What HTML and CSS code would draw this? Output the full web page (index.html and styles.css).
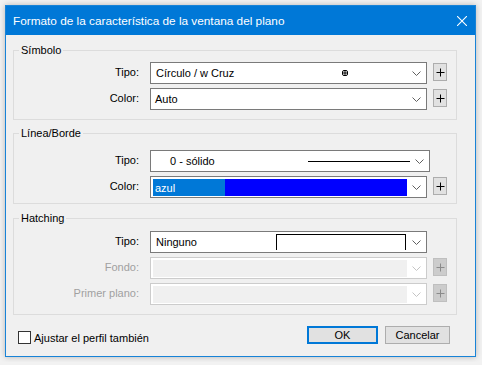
FILE: index.html
```html
<!DOCTYPE html>
<html lang="es">
<head>
    <meta charset="UTF-8">
    <title>Formato de la característica de la ventana del plano</title>
    <link rel="stylesheet" href="styles.css">
</head>
<body>

    <div class="window">
        <div class="titlebar">
            <span class="title">Formato de la característica de la ventana del plano</span>
            <svg class="close" width="10" height="10" viewBox="0 0 10 10">
                <path d="M0 0L10 10M10 0L0 10" stroke="#fff" stroke-width="1.1" fill="none"/>
            </svg>
        </div>

        <div class="content">
            <!-- Símbolo -->
            <div class="group group-symbol">
                <div class="group-title">Símbolo</div>
                <div class="rows">
                    <div class="row">
                        <label class="field-label">Tipo:</label>
                        <div class="combo">
                            <div class="combo-value">
                                <span>Círculo / w Cruz</span>
                                <svg class="symbol-mark" width="6" height="6" viewBox="0 0 6 6">
                                    <rect x="0.5" y="0.5" width="5" height="5" rx="1.5" fill="none" stroke="#000"/>
                                    <path d="M3 0.5V5.5M0.5 3H5.5" stroke="#000" fill="none"/>
                                </svg>
                            </div>
                            <div class="combo-arrow"><svg width="9" height="5" viewBox="0 0 9 5"><polyline points="0.5,0.5 4.5,4.5 8.5,0.5" fill="none" stroke="#606060"/></svg></div>
                        </div>
                        <button class="add-btn"><svg width="9" height="9" viewBox="0 0 9 9"><path d="M4.5 0.5V8.5M0.5 4.5H8.5" stroke="#000" fill="none"/></svg></button>
                    </div>
                    <div class="row">
                        <label class="field-label">Color:</label>
                        <div class="combo">
                            <div class="combo-value"><span class="plain">Auto</span></div>
                            <div class="combo-arrow"><svg width="9" height="5" viewBox="0 0 9 5"><polyline points="0.5,0.5 4.5,4.5 8.5,0.5" fill="none" stroke="#606060"/></svg></div>
                        </div>
                        <button class="add-btn"><svg width="9" height="9" viewBox="0 0 9 9"><path d="M4.5 0.5V8.5M0.5 4.5H8.5" stroke="#000" fill="none"/></svg></button>
                    </div>
                </div>
            </div>

            <!-- Línea/Borde -->
            <div class="group group-line">
                <div class="group-title">Línea/Borde</div>
                <div class="rows">
                    <div class="row">
                        <label class="field-label">Tipo:</label>
                        <div class="combo combo-wide">
                            <div class="combo-value">
                                <span class="line-name">0 - sólido</span>
                                <span class="line-sample"></span>
                            </div>
                            <div class="combo-arrow"><svg width="9" height="5" viewBox="0 0 9 5"><polyline points="0.5,0.5 4.5,4.5 8.5,0.5" fill="none" stroke="#606060"/></svg></div>
                        </div>
                    </div>
                    <div class="row">
                        <label class="field-label">Color:</label>
                        <div class="combo">
                            <div class="combo-value color-value">
                                <span class="color-selected">azul</span>
                                <span class="color-swatch" style="background: #0000ff;"></span>
                            </div>
                            <div class="combo-arrow"><svg width="9" height="5" viewBox="0 0 9 5"><polyline points="0.5,0.5 4.5,4.5 8.5,0.5" fill="none" stroke="#606060"/></svg></div>
                        </div>
                        <button class="add-btn"><svg width="9" height="9" viewBox="0 0 9 9"><path d="M4.5 0.5V8.5M0.5 4.5H8.5" stroke="#000" fill="none"/></svg></button>
                    </div>
                </div>
            </div>

            <!-- Hatching -->
            <div class="group group-hatch">
                <div class="group-title">Hatching</div>
                <div class="rows">
                    <div class="row">
                        <label class="field-label">Tipo:</label>
                        <div class="combo">
                            <div class="combo-value">
                                <span>Ninguno</span>
                                <span class="hatch-sample"></span>
                            </div>
                            <div class="combo-arrow"><svg width="9" height="5" viewBox="0 0 9 5"><polyline points="0.5,0.5 4.5,4.5 8.5,0.5" fill="none" stroke="#606060"/></svg></div>
                        </div>
                    </div>
                    <div class="row disabled">
                        <label class="field-label">Fondo:</label>
                        <div class="combo">
                            <div class="combo-value color-value"><span class="disabled-fill"></span></div>
                            <div class="combo-arrow"><svg width="9" height="5" viewBox="0 0 9 5"><polyline points="0.5,0.5 4.5,4.5 8.5,0.5" fill="none" stroke="#c4c4c4"/></svg></div>
                        </div>
                        <button class="add-btn"><svg width="9" height="9" viewBox="0 0 9 9"><path d="M4.5 0.5V8.5M0.5 4.5H8.5" stroke="#8a8a8a" fill="none"/></svg></button>
                    </div>
                    <div class="row disabled">
                        <label class="field-label">Primer plano:</label>
                        <div class="combo">
                            <div class="combo-value color-value"><span class="disabled-fill"></span></div>
                            <div class="combo-arrow"><svg width="9" height="5" viewBox="0 0 9 5"><polyline points="0.5,0.5 4.5,4.5 8.5,0.5" fill="none" stroke="#c4c4c4"/></svg></div>
                        </div>
                        <button class="add-btn"><svg width="9" height="9" viewBox="0 0 9 9"><path d="M4.5 0.5V8.5M0.5 4.5H8.5" stroke="#8a8a8a" fill="none"/></svg></button>
                    </div>
                </div>
            </div>

            <div class="footer">
                <label class="check">
                    <span class="check-box"></span>
                    <span>Ajustar el perfil también</span>
                </label>
                <div class="buttons">
                    <button class="btn btn-default">OK</button>
                    <button class="btn">Cancelar</button>
                </div>
            </div>
        </div>
    </div>

</body>
</html>
```

FILE: styles.css
```css
body {
    margin: 0;
    padding: 5px;
    background: #f2f2f2;
    font-family: "Liberation Sans", Arial, sans-serif;
    font-size: 11px;
    color: #000;
}
.window {
    box-sizing: border-box;
    width: 471px;
    height: 352px;
    border: 1px solid #1883d7;
    background: #f0f0f0;
    box-shadow: 0 0 6px rgba(0, 0, 0, 0.25);
}
.titlebar {
    height: 29px;
    background: #0078d7;
    color: #fff;
    display: flex;
    align-items: center;
    justify-content: space-between;
    padding: 0 8px 0 7px;
    font-size: 11.8px;
}
.content {
    padding-top: 15px;
}
.group {
    width: 444px;
    box-sizing: border-box;
    margin-left: 7px;
    border: 1px solid #dcdcdc;
}
.group-title {
    width: fit-content;
    margin: -8px 0 0 5px;
    padding: 0 2px;
    line-height: 14px;
    background: #f0f0f0;
}
.rows {
    display: flex;
    flex-direction: column;
    gap: 4px;
}
.group-symbol .rows { margin-top: 5px; padding-bottom: 9px; }
.group-line { margin-top: 13px; }
.group-line .rows { margin-top: 10px; padding-bottom: 5px; }
.group-hatch { margin-top: 14px; }
.group-hatch .rows { margin-top: 6px; padding-bottom: 9px; }

.row {
    display: flex;
    align-items: flex-start;
    height: 22px;
}
.field-label {
    width: 125px;
    margin-right: 11px;
    text-align: right;
    line-height: 20px;
}
.combo {
    box-sizing: border-box;
    width: 277px;
    height: 22px;
    border: 1px solid #7a7a7a;
    background: #fff;
    display: flex;
}
.combo-wide {
    width: 280px;
}
.combo-value {
    flex: 1;
    display: flex;
    align-items: center;
    padding-left: 5px;
}
.combo-value .plain {
    margin-left: -1px;
}
.combo-arrow {
    width: 19px;
    display: flex;
    align-items: center;
    justify-content: center;
}
.symbol-mark {
    margin-left: auto;
    margin-right: 59px;
}
.line-name {
    margin-left: 14px;
}
.line-sample {
    margin-left: auto;
    width: 102px;
    height: 1px;
    background: #000;
    margin-top: 1px;
}
.hatch-sample {
    margin-left: auto;
    margin-right: 1px;
    align-self: flex-start;
    margin-top: 2px;
    box-sizing: border-box;
    width: 130px;
    height: 16px;
    border: 1px solid #000;
    border-bottom: none;
}
.color-value {
    padding: 2px 0 1px 2px;
    align-items: stretch;
}
.color-selected {
    width: 70px;
    background: #0078d7;
    color: #fff;
    padding-left: 2px;
    display: flex;
    align-items: center;
}
.color-swatch {
    flex: 1;
}
.add-btn {
    box-sizing: border-box;
    width: 14px;
    height: 18px;
    margin: 1px 0 0 6px;
    padding: 0;
    border: 1px solid #adadad;
    background: #e1e1e1;
    display: flex;
    align-items: center;
    justify-content: center;
}

.disabled .field-label {
    color: #a0a0a0;
}
.disabled .combo {
    border-color: #cccccc;
}
.disabled-fill {
    flex: 1;
    background: #f0f0f0;
}
.disabled .add-btn {
    background: #cccccc;
    border-color: #bfbfbf;
}

.footer {
    display: flex;
    align-items: flex-start;
    margin-top: 11px;
    padding: 0 25px 0 12px;
}
.check {
    display: flex;
    align-items: center;
    margin-top: 5px;
    gap: 3px;
}
.check-box {
    box-sizing: border-box;
    width: 13px;
    height: 13px;
    border: 1px solid #333;
    background: #fff;
}
.buttons {
    margin-left: auto;
    display: flex;
    gap: 7px;
}
.btn {
    box-sizing: border-box;
    width: 65px;
    height: 18px;
    padding: 0;
    border: 1px solid #adadad;
    background: #e1e1e1;
    font-family: "Liberation Sans", Arial, sans-serif;
    font-size: 11px;
    color: #000;
}
.btn-default {
    width: 71px;
    border: 2px solid #0078d7;
}
```
